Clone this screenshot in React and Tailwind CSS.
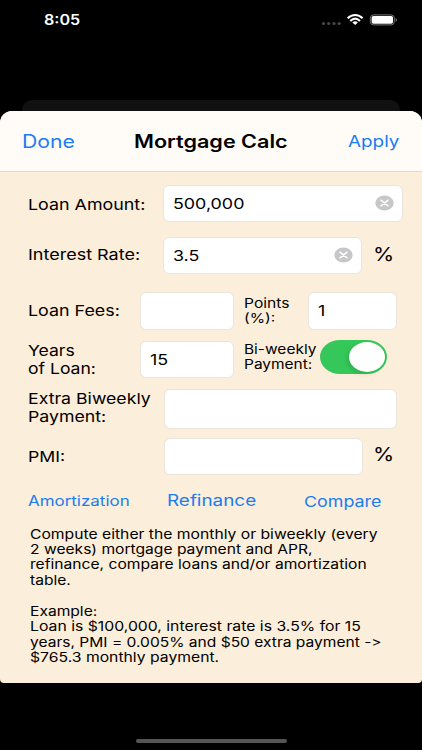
import { useState } from "react";

// wide text, every label on the screen goes through this
function Wide({ children, className = "" }) {
  return (
    <span className={`block w-max origin-left whitespace-nowrap ${className}`}>
      {children}
    </span>
  );
}

function Field({ value, onChange, clearable, className }) {
  return (
    <div className={`flex shrink-0 items-center rounded-[6px] border border-[#e9e4dc] bg-white ${className}`}>
      <div className="min-w-0 flex-1 pl-[9px]">
        <Wide className="scale-x-[1.19] text-[15px] leading-[20px]">{value}</Wide>
      </div>
      {clearable && (
        <button className="mb-px mr-[8px]" onClick={() => onChange("")}>
          <svg width="19" height="16" viewBox="0 0 19 16">
            <ellipse cx="9.5" cy="8" rx="9.2" ry="7.6" fill="#c7c7c9" />
            <path d="M6 5.2 L13 10.8 M13 5.2 L6 10.8" stroke="#fff" strokeWidth="1.5" strokeLinecap="round" />
          </svg>
        </button>
      )}
    </div>
  );
}

function StatusBar() {
  return (
    <div className="flex h-[100px] items-start pt-[11px] text-white">
      <div className="w-[320px] pl-[44px]">
        <Wide className="scale-x-[1.15] text-[14px] font-semibold leading-[18px]">8:05</Wide>
      </div>
      <svg className="mt-[2px]" width="80" height="15" viewBox="0 0 80 15">
        <g fill="#48484a">
          <circle cx="3.5" cy="10.5" r="1.6" />
          <circle cx="8.7" cy="10.5" r="1.6" />
          <circle cx="14" cy="10.5" r="1.6" />
          <circle cx="19.2" cy="10.5" r="1.6" />
        </g>
        <g fill="none" stroke="#fff" strokeWidth="2.1">
          <path d="M27.7 5.3 C32 0.9 38.3 0.9 42.6 5.3" />
          <path d="M30.3 7.9 C33.3 5 37 5 40 7.9" />
        </g>
        <path d="M32.4 9.4 C34.2 8 36.1 8 37.9 9.4 L35.15 12 Z" fill="#fff" />
        <rect x="50.3" y="1.9" width="24" height="10" rx="3.2" fill="none" stroke="#77777a" />
        <rect x="51.6" y="3" width="21.4" height="7.8" rx="1.8" fill="#fff" />
        <path d="M75.6 5 C77.4 5.6 77.4 8.2 75.6 8.8 Z" fill="#77777a" />
      </svg>
    </div>
  );
}

export default function App() {
  const [amount, setAmount] = useState("500,000");
  const [rate, setRate] = useState("3.5");
  const [biweekly, setBiweekly] = useState(true);

  return (
    <div className="flex h-[750px] w-[422px] flex-col overflow-hidden bg-black font-['Inter',sans-serif] text-black">

      <StatusBar />
      <div className="mx-[22px] h-[11px] shrink-0 rounded-t-[10px] bg-[#111111]" />

      <div className="flex h-[571.5px] shrink-0 flex-col overflow-hidden rounded-t-[12px] rounded-b-[4px] bg-[#fbeeda]">

        <div className="flex h-[61px] shrink-0 items-center border-b border-[#dedad4] bg-[#fffcf8] text-[18px] leading-[24px]">
          <button className="w-[113px] pl-[22px] pt-[2px] text-left text-[#1a7cf0]">
            <Wide className="scale-x-[1.18]">Done</Wide>
          </button>
          <h1 className="w-[214px] pl-[21px] pt-[2px] font-semibold">
            <Wide className="scale-x-[1.2]">Mortgage Calc</Wide>
          </h1>
          <button className="pl-[21px] text-left text-[16px] text-[#1a7cf0]">
            <Wide className="scale-x-[1.18]">Apply</Wide>
          </button>
        </div>

        <div className="flex flex-col pl-[28px] text-[15px] leading-[18px]">

          <div className="mt-[13px] flex h-[37px] items-center">
            <div className="w-[135px] pt-[3px]">
              <Wide className="scale-x-[1.19]">Loan Amount:</Wide>
            </div>
            <Field value={amount} onChange={setAmount} clearable className="h-[37px] w-[240px]" />
          </div>

          <div className="mt-[15px] flex h-[37px] items-center">
            <div className="w-[135px] pb-[2px]">
              <Wide className="scale-x-[1.2]">Interest Rate:</Wide>
            </div>
            <Field value={rate} onChange={setRate} clearable className="h-[37px] w-[199px]" />
            <div className="pb-px pl-[11px] text-[18px]">
              <Wide className="scale-x-[1.2]">%</Wide>
            </div>
          </div>

          <div className="mt-[18px] flex h-[38px] items-center">
            <div className="w-[112px] pb-px">
              <Wide className="scale-x-[1.19]">Loan Fees:</Wide>
            </div>
            <Field value="" className="h-[38px] w-[94px]" />
            <div className="w-[74px] pb-px pl-[10px] text-[13px] leading-[15px]">
              <Wide className="scale-x-[1.2]">Points<br />(%):</Wide>
            </div>
            <Field value="1" className="h-[38px] w-[89px]" />
          </div>

          <div className="mt-[11px] flex h-[37px] items-center">
            <div className="w-[112px] pt-px">
              <Wide className="scale-x-[1.17]">Years<br />of Loan:</Wide>
            </div>
            <Field value="15" className="h-[37px] w-[94px]" />
            <div className="w-[86px] pb-[5px] pl-[10px] text-[13px] leading-[15px]">
              <Wide className="scale-x-[1.19]">Bi-weekly<br />Payment:</Wide>
            </div>
            <button
              onClick={() => setBiweekly(!biweekly)}
              className={`mb-[5px] flex h-[34px] w-[67px] items-center rounded-[20px/17px] px-[2px] ${biweekly ? "justify-end bg-[#35c759]" : "justify-start bg-[#e9e9ea]"}`}
            >
              <span className="h-[30px] w-[36px] rounded-[50%] bg-white shadow-[-2px_2px_4px_rgba(0,0,0,0.12)]" />
            </button>
          </div>

          <div className="mt-[11px] flex h-[40px] items-center">
            <div className="w-[136px] pb-[2px]">
              <Wide className="scale-x-[1.18]">Extra Biweekly<br />Payment:</Wide>
            </div>
            <Field value="" className="h-[40px] w-[233px]" />
          </div>

          <div className="mt-[9px] flex h-[37px] items-center">
            <div className="w-[136px]">
              <Wide className="scale-x-[1.18]">PMI:</Wide>
            </div>
            <Field value="" className="h-[37px] w-[199px]" />
            <div className="pb-[4px] pl-[10px] text-[18px]">
              <Wide className="scale-x-[1.2]">%</Wide>
            </div>
          </div>

          <div className="mt-[14px] flex h-[22px] items-center text-[#1a7cf0]">
            <button className="w-[139px] pt-px text-left text-[14px]">
              <Wide className="scale-x-[1.21]">Amortization</Wide>
            </button>
            <button className="w-[137px] text-left text-[16px]">
              <Wide className="scale-x-[1.18]">Refinance</Wide>
            </button>
            <button className="pt-[3px] text-left text-[15px]">
              <Wide className="scale-x-[1.19]">Compare</Wide>
            </button>
          </div>

          <div className="mt-[15.5px] pl-[1.5px] text-[13px] leading-[15.45px] [font-feature-settings:'calt'_0]">
            <Wide className="scale-x-[1.207]">Compute either the monthly or biweekly (every</Wide>
            <Wide className="scale-x-[1.2]">2 weeks) mortgage payment and APR,</Wide>
            <Wide className="scale-x-[1.202]">refinance, compare loans and/or amortization</Wide>
            <Wide className="scale-x-[1.2]">table.</Wide>
            <Wide className="mt-[15.45px] scale-x-[1.2]">Example:</Wide>
            <Wide className="scale-x-[1.213]">Loan is $100,000, interest rate is 3.5% for 15</Wide>
            <Wide className="scale-x-[1.197]">years, PMI = 0.005% and $50 extra payment -&gt;</Wide>
            <Wide className="scale-x-[1.21]">$765.3 monthly payment.</Wide>
          </div>

        </div>
      </div>

      <div className="mx-auto mt-[56.5px] h-[4px] w-[151px] shrink-0 rounded-full bg-[#555555]" />

    </div>
  );
}
